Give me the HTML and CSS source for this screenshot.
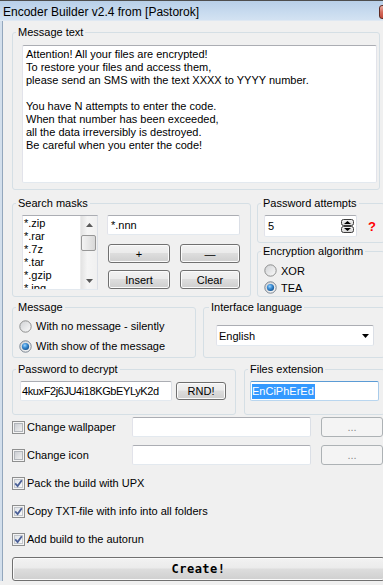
FILE: index.html
```html
<!DOCTYPE html>
<html>
<head>
<meta charset="utf-8">
<title>Encoder Builder v2.4</title>
<link rel="stylesheet" href="styles.css">
</head>
<body>
<svg class="defs" width="0" height="0" aria-hidden="true">
  <defs>
    <linearGradient id="cbg" x1="0" y1="0" x2="1" y2="1">
      <stop offset="0" stop-color="#c9ccd1"/>
      <stop offset="1" stop-color="#f3f3f3"/>
    </linearGradient>
    <linearGradient id="cbgc" x1="0" y1="0" x2="1" y2="1">
      <stop offset="0" stop-color="#dfe3e8"/>
      <stop offset="1" stop-color="#fafafa"/>
    </linearGradient>
    <linearGradient id="rbg" x1="0" y1="0" x2="1" y2="1">
      <stop offset="0" stop-color="#cfd1d4"/>
      <stop offset="1" stop-color="#fbfbfb"/>
    </linearGradient>
    <radialGradient id="rdot" cx="0.4" cy="0.35" r="0.7">
      <stop offset="0" stop-color="#9fd6ff"/>
      <stop offset="0.45" stop-color="#3d8fd6"/>
      <stop offset="1" stop-color="#124f8c"/>
    </radialGradient>
    <linearGradient id="spbg" x1="0" y1="0" x2="0" y2="1">
      <stop offset="0" stop-color="#f4f4f4"/>
      <stop offset="1" stop-color="#d6d6d6"/>
    </linearGradient>
  </defs>
</svg>
<div class="window">
  <div class="titlebar">
    <span class="title">Encoder Builder v2.4 from [Pastorok]</span>
    <span class="close"></span>
  </div>
  <div class="client">
    <fieldset class="group g-msgtext">
      <legend>Message text</legend>
      <div class="gbody">
        <div class="memo">Attention! All your files are encrypted!
To restore your files and access them,
please send an SMS with the text XXXX to YYYY number.

You have N attempts to enter the code.
When that number has been exceeded,
all the data irreversibly is destroyed.
Be careful when you enter the code!</div>
      </div>
    </fieldset>

    <div class="row row2">
      <fieldset class="group g-masks">
        <legend>Search masks</legend>
        <div class="gbody masks">
          <div class="listbox">
            <div class="items">
              <div>*.zip</div>
              <div>*.rar</div>
              <div>*.7z</div>
              <div>*.tar</div>
              <div>*.gzip</div>
              <div>*.jpg</div>
            </div>
            <div class="vscroll">
              <span class="sb-btn"><svg width="7" height="4" viewBox="0 0 7 4"><polygon points="0,4 7,4 3.5,0" fill="#5a5a5a"/></svg></span>
              <span class="thumb"></span>
              <span class="sb-btn sb-down"><svg width="7" height="4" viewBox="0 0 7 4"><polygon points="0,0 7,0 3.5,4" fill="#5a5a5a"/></svg></span>
            </div>
          </div>
          <div class="mask-ctrls">
            <div class="edit">*.nnn</div>
            <div class="btn-grid">
              <button class="btn">+</button>
              <button class="btn">—</button>
              <button class="btn">Insert</button>
              <button class="btn">Clear</button>
            </div>
          </div>
        </div>
      </fieldset>
      <div class="col-right">
        <fieldset class="group g-attempts">
          <legend>Password attempts</legend>
          <div class="gbody attempts">
            <div class="edit edit-spin">
              <span>5</span>
              <svg class="spin" width="13" height="14" viewBox="0 0 13 14">
                <rect x="0.5" y="0.5" width="12" height="6" rx="2" fill="url(#spbg)" stroke="#3c3c3c"/>
                <rect x="0.5" y="7.5" width="12" height="6" rx="2" fill="url(#spbg)" stroke="#3c3c3c"/>
                <polygon points="3,5 10,5 6.5,2" fill="#000"/>
                <polygon points="3,9 10,9 6.5,12" fill="#000"/>
              </svg>
            </div>
            <span class="help">?</span>
          </div>
        </fieldset>
        <fieldset class="group g-algo">
          <legend>Encryption algorithm</legend>
          <div class="gbody algo">
            <div class="radio">
              <svg width="13" height="13" viewBox="0 0 13 13"><circle cx="6.5" cy="6.5" r="5.7" fill="url(#rbg)" stroke="#8e8f8f"/></svg>
              <span>XOR</span>
            </div>
            <div class="radio">
              <svg width="13" height="13" viewBox="0 0 13 13"><circle cx="6.5" cy="6.5" r="5.7" fill="url(#rbg)" stroke="#7a8591"/><circle cx="6.5" cy="6.5" r="3.6" fill="url(#rdot)"/></svg>
              <span>TEA</span>
            </div>
          </div>
        </fieldset>
      </div>
    </div>

    <div class="row row3">
      <fieldset class="group g-message">
        <legend>Message</legend>
        <div class="gbody msgradios">
          <div class="radio">
            <svg width="13" height="13" viewBox="0 0 13 13"><circle cx="6.5" cy="6.5" r="5.7" fill="url(#rbg)" stroke="#8e8f8f"/></svg>
            <span>With no message - silently</span>
          </div>
          <div class="radio">
            <svg width="13" height="13" viewBox="0 0 13 13"><circle cx="6.5" cy="6.5" r="5.7" fill="url(#rbg)" stroke="#7a8591"/><circle cx="6.5" cy="6.5" r="3.6" fill="url(#rdot)"/></svg>
            <span>With show of the message</span>
          </div>
        </div>
      </fieldset>
      <fieldset class="group g-lang">
        <legend>Interface language</legend>
        <div class="gbody lang">
          <div class="combo">
            <span>English</span>
            <svg width="7" height="4" viewBox="0 0 7 4"><polygon points="0,0 7,0 3.5,4" fill="#000"/></svg>
          </div>
        </div>
      </fieldset>
    </div>

    <div class="row row4">
      <fieldset class="group g-pass">
        <legend>Password to decrypt</legend>
        <div class="gbody pass">
          <div class="edit edit-pass">4kuxF2j6JU4i18KGbEYLyK2d</div>
          <button class="btn btn-rnd">RND!</button>
        </div>
      </fieldset>
      <fieldset class="group g-ext">
        <legend>Files extension</legend>
        <div class="gbody ext">
          <div class="edit edit-ext"><span class="sel">EnCiPhErEd</span></div>
        </div>
      </fieldset>
    </div>

    <div class="options">
      <div class="chk">
        <svg width="13" height="13" viewBox="0 0 13 13"><rect x="0.5" y="0.5" width="12" height="12" fill="#f4f4f4" stroke="#8e8f8f"/><rect x="2.5" y="2.5" width="8" height="8" fill="url(#cbg)" stroke="#b1b5ba"/></svg>
        <span>Change wallpaper</span>
      </div>
      <div class="edit"></div>
      <button class="btn btn-dis">...</button>

      <div class="chk">
        <svg width="13" height="13" viewBox="0 0 13 13"><rect x="0.5" y="0.5" width="12" height="12" fill="#f4f4f4" stroke="#8e8f8f"/><rect x="2.5" y="2.5" width="8" height="8" fill="url(#cbg)" stroke="#b1b5ba"/></svg>
        <span>Change icon</span>
      </div>
      <div class="edit"></div>
      <button class="btn btn-dis">...</button>

      <div class="chk wide">
        <svg width="13" height="13" viewBox="0 0 13 13"><rect x="0.5" y="0.5" width="12" height="12" fill="#f4f4f4" stroke="#8e8f8f"/><rect x="2.5" y="2.5" width="8" height="8" fill="url(#cbgc)" stroke="#c3c7cc"/><path d="M3.2 6.4 L5.6 9 L9.8 3.2" fill="none" stroke="#4a5f97" stroke-width="1.8"/></svg>
        <span>Pack the build with UPX</span>
      </div>
      <div class="chk wide">
        <svg width="13" height="13" viewBox="0 0 13 13"><rect x="0.5" y="0.5" width="12" height="12" fill="#f4f4f4" stroke="#8e8f8f"/><rect x="2.5" y="2.5" width="8" height="8" fill="url(#cbgc)" stroke="#c3c7cc"/><path d="M3.2 6.4 L5.6 9 L9.8 3.2" fill="none" stroke="#4a5f97" stroke-width="1.8"/></svg>
        <span>Copy TXT-file with info into all folders</span>
      </div>
      <div class="chk wide">
        <svg width="13" height="13" viewBox="0 0 13 13"><rect x="0.5" y="0.5" width="12" height="12" fill="#f4f4f4" stroke="#8e8f8f"/><rect x="2.5" y="2.5" width="8" height="8" fill="url(#cbgc)" stroke="#c3c7cc"/><path d="M3.2 6.4 L5.6 9 L9.8 3.2" fill="none" stroke="#4a5f97" stroke-width="1.8"/></svg>
        <span>Add build to the autorun</span>
      </div>
    </div>

    <button class="btn btn-create">Create!</button>
  </div>
</div>
</body>
</html>
```

FILE: styles.css
```css
* { box-sizing: border-box; }
html, body { margin: 0; padding: 0; }
body {
  background: #f0f0f0;
  font-family: "Liberation Sans", Arial, sans-serif;
  font-size: 11px;
  color: #000;
  overflow: hidden;
}
.defs { position: absolute; width: 0; height: 0; }

.window {
  width: 383px;
  height: 585px;
  overflow: hidden;
  background: #f0f0f0;
}

.titlebar {
  height: 21px;
  display: flex;
  align-items: flex-start;
  padding-left: 3px;
  border-top: 1px solid #4e4e4e;
  background: linear-gradient(#b8cfe8, #c8dbef 60%, #d3e2f2);
  border-bottom: 1px solid #dfe8f2;
}
.title {
  font-size: 12px;
  line-height: 16px;
  margin-top: 3px;
  white-space: nowrap;
  flex: none;
}
.close {
  flex: none;
  margin-left: auto;
  margin-right: -39px;
  margin-top: 4px;
  width: 43px;
  height: 14px;
  border: 1px solid #5e2a22;
  border-radius: 3px;
  background: linear-gradient(#eab1a6, #d36b5c 50%, #c24a3c);
}

.client {
  width: 385px;
  border-left: 2px solid #d3dfec;
  box-shadow: inset 1px 0 0 #93a7bd;
  padding: 4px 0 0 10px;
}

.group {
  margin: 0;
  padding: 0;
  min-width: 0;
  border: 1px solid #d5dfe5;
  border-radius: 3px;
}
.group > legend {
  padding: 0 2px;
  margin-left: 3px;
  line-height: 14px;
  font-size: 11px;
}

.edit {
  background: #fff;
  border: 1px solid;
  border-color: #abadb3 #dbdfe6 #e3e9ef #e2e3ea;
  border-radius: 2px;
  height: 20px;
  display: flex;
  align-items: center;
  padding: 0 3px;
  white-space: nowrap;
  overflow: hidden;
}

.btn {
  font: inherit;
  color: #000;
  padding: 0;
  border: 1px solid #707070;
  border-radius: 3px;
  background: linear-gradient(#f2f2f2 0%, #ebebeb 45%, #dddddd 50%, #cfcfcf 100%);
  box-shadow: inset 0 0 0 1px #fbfbfb;
  display: flex;
  align-items: center;
  justify-content: center;
}
.btn-dis {
  border-color: #adb2b5;
  background: #f4f4f4;
  box-shadow: none;
  color: #8a8a8a;
}

/* Message text */
.g-msgtext { width: 368px; }
.g-msgtext .gbody { padding: 6px 0 6px 9px; }
.memo {
  width: 355px;
  height: 138px;
  background: #fff;
  border: 1px solid;
  border-color: #abadb3 #e2e3ea #e3e9ef #e2e3ea;
  border-radius: 2px;
  padding: 2px 3px;
  line-height: 13px;
  white-space: pre-line;
}

.row { display: flex; }
.row2 { margin-top: 6px; gap: 6px; }
.row3 { margin-top: 3px; gap: 7px; }
.row4 { margin-top: 4px; gap: 8px; }

/* Search masks */
.g-masks { width: 239px; flex: none; }
.masks { display: flex; gap: 9px; padding: 5px 0 6px 9px; }
.listbox {
  width: 76px;
  height: 75px;
  display: flex;
  background: #fff;
  border: 1px solid;
  border-color: #abadb3 #dbdfe6 #e3e9ef #e2e3ea;
}
.items {
  flex: 1;
  padding: 1px 0 0 1px;
  line-height: 13px;
  overflow: hidden;
}
.vscroll {
  width: 17px;
  display: flex;
  flex-direction: column;
  background: linear-gradient(90deg, #e3e3e3, #f5f5f5 40%, #f0f0f0);
  border-left: 1px solid #ececec;
}
.sb-btn {
  height: 17px;
  display: flex;
  align-items: center;
  justify-content: center;
  flex: none;
}
.sb-down { margin-top: auto; }
.thumb {
  height: 16px;
  margin: 2px 1px 0 0;
  border: 1px solid #979797;
  border-radius: 2px;
  background: linear-gradient(90deg, #f3f3f3, #e6e6e6 50%, #d8d8d8);
}
.mask-ctrls { width: 133px; }
.btn-grid {
  display: grid;
  grid-template-columns: 62px 60px;
  grid-auto-rows: 19px;
  column-gap: 10px;
  row-gap: 7px;
  margin: 9px 0 0 1px;
}

/* right column */
.col-right { flex: 1; display: flex; flex-direction: column; }
.attempts { display: flex; align-items: center; padding: 5px 0 5px 6px; }
.edit-spin { width: 93px; height: 22px; padding: 0 2px 0 3px; }
.edit-spin .spin { margin-left: auto; }
.help {
  margin-left: 11px;
  color: #ff0000;
  font-weight: bold;
  font-size: 13px;
}
.g-algo { margin-top: 1px; flex: 1; }
.algo { padding: 4px 0 0 6px; }
.radio { display: flex; align-items: center; gap: 4px; }
.algo .radio { height: 17px; }
.radio svg, .chk svg { flex: none; }

/* Message / language */
.g-message { width: 184px; flex: none; }
.msgradios { padding: 2px 0 1px 6px; }
.msgradios .radio { height: 20px; }
.g-lang { flex: 1; }
.g-lang > legend { margin-left: 5px; }
.lang { padding: 11px 0 11px 12px; }
.combo {
  width: 158px;
  height: 21px;
  display: flex;
  align-items: center;
  justify-content: space-between;
  padding: 0 4px 0 2px;
  background: #fff;
  border: 1px solid;
  border-color: #abadb3 #dbdfe6 #e3e9ef #e2e3ea;
  border-radius: 2px;
}

/* Password / extension */
.g-pass { width: 224px; flex: none; }
.pass { display: flex; align-items: center; padding: 5px 0 13px 7px; }
.edit-pass { width: 152px; padding: 0 1px; letter-spacing: -0.4px; }
.btn-rnd { width: 50px; height: 18px; margin-left: 4px; }
.g-ext { flex: 1; }
.ext { padding: 5px 0 13px 5px; }
.edit-ext {
  width: 129px;
  padding: 0 1px;
  border-color: #5b9bd5 #a8cbea #b9d6ef #a8cbea;
}
.sel {
  background: #3399ff;
  color: #fff;
  line-height: 15px;
  padding: 0 1px 0 0;
}

/* options */
.options {
  margin-top: 2px;
  display: grid;
  grid-template-columns: 110px 179px 62px;
  grid-auto-rows: 20px;
  column-gap: 10px;
  row-gap: 8px;
}
.chk { display: flex; align-items: center; gap: 2px; white-space: nowrap; }
.chk.wide { grid-column: 1 / -1; }

.btn-create {
  margin-top: 8px;
  width: 373px;
  height: 24px;
  font-family: "DejaVu Sans Mono", "Liberation Mono", monospace;
  font-weight: bold;
  font-size: 12px;
  letter-spacing: 0.5px;
}
```
